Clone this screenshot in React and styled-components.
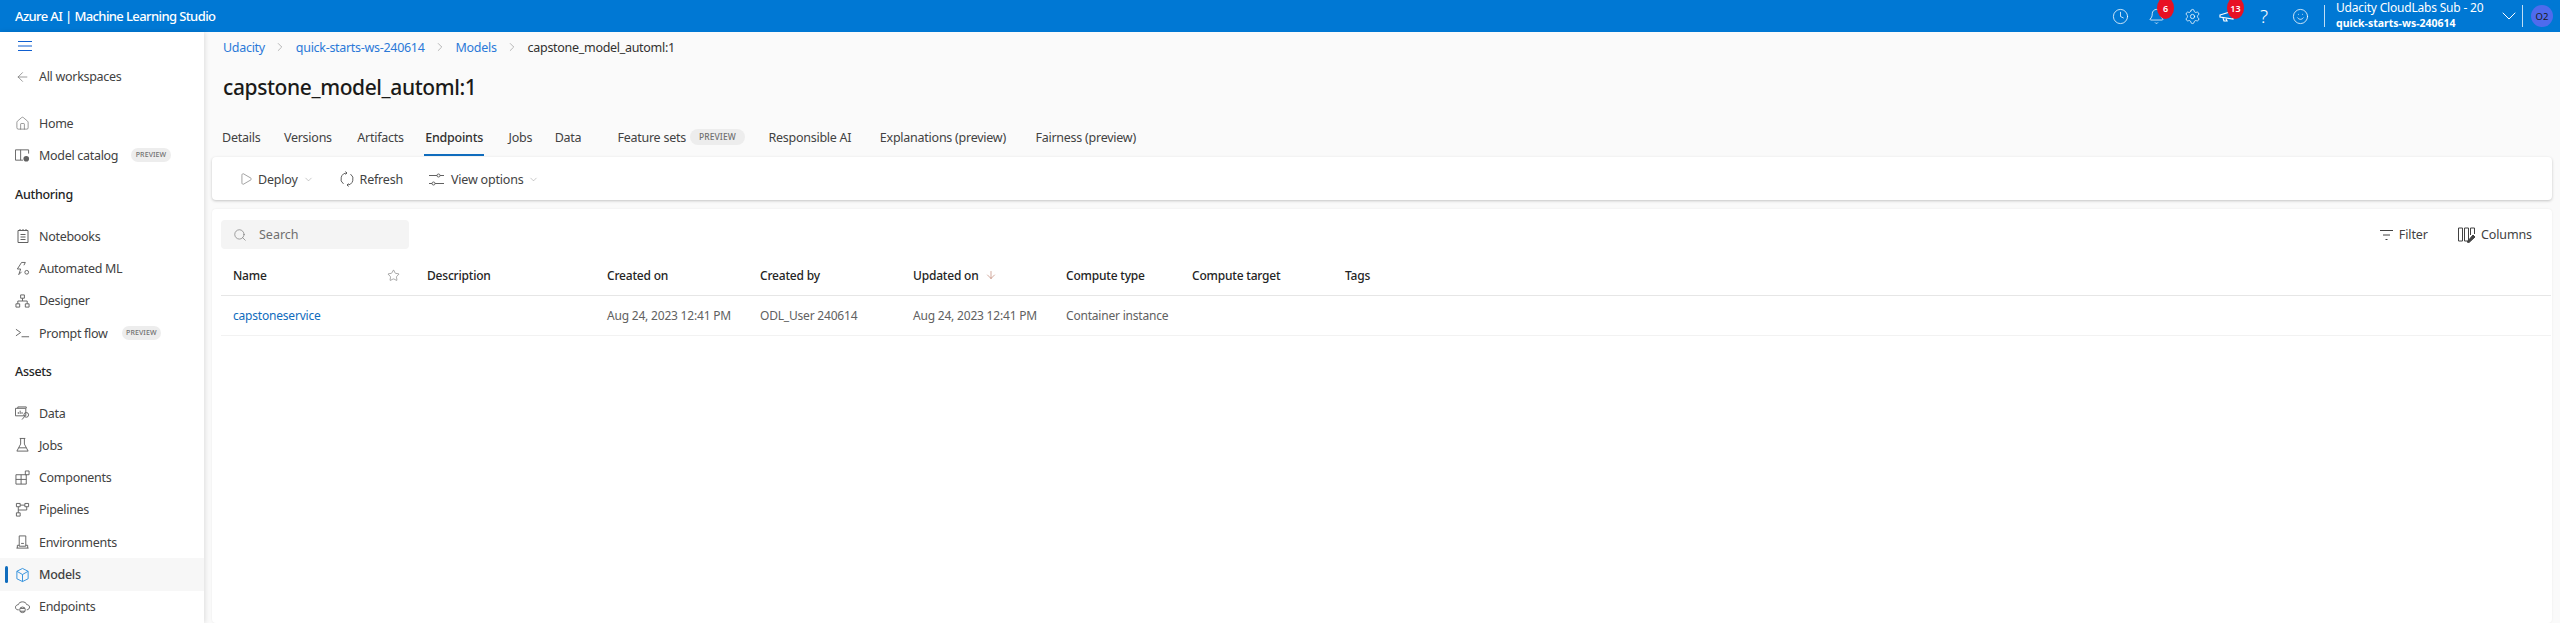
import React from 'react'
import styled, { createGlobalStyle } from 'styled-components'
import { ArrowLeft, Home, Play, ChevronDown, ChevronRight, Search, Star, Clock, Bell, Settings, Smile, ArrowDown } from 'lucide-react'

const GlobalStyle = createGlobalStyle`
  html, body { margin: 0; padding: 0; height: 100%; overflow: hidden; }
  body { font-family: "Noto Sans", "Open Sans", Arial, sans-serif; font-size: 13px; color: #323130; background: #fff; }
  #root { height: 100%; }
`

const Page = styled.div`
  display: flex;
  flex-direction: column;
  height: 623px;
  overflow: hidden;
`

const Header = styled.header`
  display: flex;
  align-items: center;
  flex: 0 0 32px;
  height: 32px;
  padding-left: 15px;
  background: #0078d4;
  color: #fff;
`

const Brand = styled.div`
  font-size: 13px;
  font-weight: 500;
  letter-spacing: -0.6px;
`

const HeaderRight = styled.div`
  display: flex;
  align-items: center;
  margin-left: auto;
  height: 100%;
`

const HeaderIcon = styled.div`
  position: relative;
  display: flex;
  align-items: center;
  justify-content: center;
  width: ${props => props.$w || 36}px;
  height: 32px;
  color: #fff;
`

const Badge = styled.span`
  position: absolute;
  top: -3px;
  left: ${props => props.$left}px;
  width: 17px;
  height: 22px;
  border-radius: 50%;
  background: #e81123;
  font-size: 9px;
  font-weight: 600;
  line-height: 24px;
  text-align: center;
`

const QuestionMark = styled.span`
  font-size: 19px;
  font-weight: 300;
  line-height: 32px;
`

const Divider = styled.div`
  width: 1px;
  height: 22px;
  background: rgba(255, 255, 255, 0.75);
`

const Account = styled.div`
  display: flex;
  flex-direction: column;
  align-self: flex-start;
  width: 159px;
  margin-left: 11px;
`

const AccountName = styled.div`
  font-size: 12px;
  line-height: 16.5px;
  white-space: nowrap;
  letter-spacing: -0.2px;
`

const AccountSub = styled.div`
  font-size: 10.5px;
  font-weight: 700;
  line-height: 15px;
  margin-top: -1px;
  white-space: nowrap;
`

const Avatar = styled.div`
  display: flex;
  align-items: center;
  justify-content: center;
  width: 22px;
  height: 22px;
  margin: 0 7px 0 8px;
  border-radius: 50%;
  background: #4f6bed;
  color: #1b1a19;
  font-size: 9.5px;
`

const Body = styled.div`
  display: flex;
  flex: 1;
  min-height: 0;
`

const Sidebar = styled.nav`
  display: flex;
  flex-direction: column;
  flex: 0 0 204px;
  box-shadow: 1px 0 5px rgba(0, 0, 0, 0.12);
  z-index: 1;
  background: #fff;
`

const Burger = styled.div`
  display: flex;
  height: 29px;
  padding-left: 18px;
  align-items: center;
  color: #0f5fd0;
`

const BackGroup = styled.div`
  display: flex;
  flex-direction: column;
  margin-bottom: 14px;
`

const NavItem = styled.div`
  position: relative;
  display: flex;
  align-items: center;
  flex: 0 0 32.3px;
  gap: 9px;
  padding-left: 15px;
  font-size: 12.5px;
  letter-spacing: -0.3px;
  color: #424242;
  background: ${props => (props.$active ? '#f7f7f7' : 'transparent')};
  ${props => props.$active && `
    font-weight: 500;
    &::before {
      content: '';
      position: absolute;
      left: 5px;
      top: 8px;
      width: 3px;
      height: 17px;
      border-radius: 2px;
      background: #0f6cbd;
    }
  `}
`

const NavIcon = styled.span`
  display: flex;
  align-items: center;
  justify-content: center;
  width: 15px;
  height: 18px;
  color: ${props => (props.$active ? '#2f8fdc' : '#616161')};
`

const Section = styled.div`
  display: flex;
  align-items: center;
  height: 32px;
  padding-left: 15px;
  margin: ${props => props.$margin};
  font-size: 12.5px;
  font-weight: 500;
  letter-spacing: -0.3px;
  color: #242424;
`

const Chip = styled.span`
  margin-left: ${props => props.$ml || 0}px;
  padding: 0 ${props => (props.$big ? 9 : 4.5)}px;
  height: ${props => (props.$big ? 15.5 : 14)}px;
  border-radius: 8px;
  background: #ededed;
  color: #707070;
  font-size: ${props => (props.$big ? 8.5 : 7)}px;
  font-weight: 500;
  line-height: ${props => (props.$big ? 15.5 : 14)}px;
  letter-spacing: 0.1px;
`

const Main = styled.main`
  display: flex;
  flex-direction: column;
  flex: 1;
  min-width: 0;
  padding: 0 8px;
  background: #fafafa;
`

const Crumbs = styled.div`
  display: flex;
  align-items: center;
  height: 30px;
  padding-left: 11px;
  font-size: 12.5px;
  letter-spacing: -0.3px;
`

const CrumbLink = styled.span`
  color: #2b79d8;
`

const CrumbSep = styled.span`
  display: flex;
  width: 31px;
  justify-content: center;
  color: #888;
`

const CrumbNow = styled.span`
  color: #323130;
`

const Title = styled.h1`
  margin: 0;
  height: 47px;
  padding-left: 11px;
  font-size: 21px;
  font-weight: 500;
  line-height: 50px;
  letter-spacing: -0.4px;
  color: #1b1a19;
`

const Tabs = styled.div`
  display: flex;
  flex: 0 0 48px;
  padding-left: 10px;
`

const Tab = styled.div`
  position: relative;
  display: flex;
  align-items: center;
  gap: 4px;
  height: 36px;
  margin-top: 10px;
  margin-right: ${props => props.$mr}px;
  font-size: 12.5px;
  letter-spacing: -0.25px;
  white-space: nowrap;
  color: #424242;
  ${props => props.$active && `
    font-weight: 500;
    color: #323130;
    &::after {
      content: '';
      position: absolute;
      left: -1px;
      right: -1px;
      bottom: -1px;
      height: 2px;
      background: #0f6cbd;
    }
  `}
`

const Card = styled.section`
  background: #fff;
  border-radius: 4px;
`

const Toolbar = styled(Card)`
  display: flex;
  align-items: center;
  flex: 0 0 42px;
  padding: 1px 0 0 22px;
  box-shadow: 0 1px 3px rgba(0, 0, 0, 0.22);
`

const ToolButton = styled.div`
  display: flex;
  align-items: center;
  margin-right: ${props => props.$mr}px;
  font-size: 12.5px;
  letter-spacing: -0.2px;
  color: #424242;
`

const ToolIcon = styled.span`
  display: flex;
  justify-content: ${props => props.$align || 'center'};
  width: ${props => props.$w}px;
  color: #616161;
`

const Caret = styled.span`
  display: flex;
  margin-left: 5px;
  color: #8a8a8a;
`

const TableCard = styled(Card)`
  flex: 1;
  margin-top: 9px;
  padding: 11px 0 0 9px;
  box-shadow: 0 0 2px rgba(0, 0, 0, 0.08);
`

const FilterBar = styled.div`
  display: flex;
  align-items: center;
  height: 29px;
`

const SearchBox = styled.div`
  display: flex;
  align-items: center;
  width: 188px;
  height: 29px;
  padding-left: 12px;
  box-sizing: border-box;
  gap: 12px;
  border-radius: 4px;
  background: #f4f4f4;
  color: #6f6f6f;
  font-size: 12.5px;
`

const FilterActions = styled.div`
  display: flex;
  align-items: center;
  margin-left: auto;
  padding-right: 20px;
  font-size: 12.5px;
  letter-spacing: -0.1px;
  color: #424242;
`

const FilterAction = styled.div`
  display: flex;
  align-items: center;
  gap: ${props => props.$gap}px;
  margin-left: ${props => props.$ml || 0}px;
`

const Row = styled.div`
  display: grid;
  grid-template-columns: 160px 34px 180px 153px 153px 153px 126px 153px 1fr;
  align-items: center;
  height: ${props => props.$h}px;
  padding: ${props => props.$pt || 0}px 0 0 12px;
  margin-right: 1px;
  border-bottom: 1px solid ${props => props.$line};
  font-size: 12px;
  letter-spacing: -0.2px;
  white-space: nowrap;
`

const HeadCell = styled.div`
  display: flex;
  align-items: center;
  gap: 6px;
  font-weight: 500;
  color: #242424;
`

const StarCell = styled(HeadCell)`
  margin-left: -6px;
  color: #616161;
`

const Cell = styled.div`
  color: #616161;
`

const NameLink = styled.a`
  color: #0f6cbd;
`

const MenuIcon = () => (
  <svg width="14" height="10" viewBox="0 0 14 10" fill="none" stroke="currentColor">
    <path d="M0 .5h14M0 5h14M0 9.500h14" />
  </svg>
)

const RefreshIcon = () => (
  <svg width="16" height="16" viewBox="0 0 16 16" fill="none" stroke="currentColor">
    <path d="M8 2A6 6 0 0 0 4.500 12.900M8 14a6 6 0 0 0 3.500-10.900" />
    <path d="M6.500 .5L8 2 6.500 3.500M9.500 12.500L8 14l1.500 1.500" />
  </svg>
)

const ModelCatalogIcon = () => (
  <svg width="16" height="16" viewBox="0 0 16 16" fill="none" stroke="currentColor">
    <path d="M.5 2.500h14v4M.5 2.500v11h8M6 2.500v11" />
    <circle cx="12" cy="12" r="3" fill="currentColor" stroke="none" />
  </svg>
)

const NotebookIcon = () => (
  <svg width="14" height="16" viewBox="0 0 14 16" fill="none" stroke="currentColor">
    <path d="M2 2.500h10v12H2zM4 1v2M7 1v2M10 1v2M4.500 6.500h5M4.500 9h5M4.500 11.500h5" />
  </svg>
)

const AutoMlIcon = () => (
  <svg width="16" height="16" viewBox="0 0 16 16" fill="none" stroke="currentColor">
    <path d="M7 1L2.500 8h3.500l-2 6 3-3M7 1h4l-1.500 3" />
    <circle cx="12.500" cy="11.500" r="2" />
  </svg>
)

const DesignerIcon = () => (
  <svg width="16" height="16" viewBox="0 0 16 16" fill="none" stroke="currentColor">
    <path d="M6 1.500h4v3.500H6zM1 11h4v3.500H1zM11 11h4v3.500h-4zM8 5v3M3 11V8h10v3" />
  </svg>
)

const PromptIcon = () => (
  <svg width="16" height="16" viewBox="0 0 16 16" fill="none" stroke="currentColor">
    <path d="M1 4l5 3.500-5 3.500M7 12h8" />
  </svg>
)

const DataIcon = () => (
  <svg width="16" height="16" viewBox="0 0 16 16" fill="none" stroke="currentColor">
    <path d="M3 3V1.500h9V3M.5 3h11v8H.5zM3.500 9V7M5.500 9V5.500M7.500 9V7" />
    <circle cx="12" cy="10" r="2.500" />
    <path d="M10 12l-2.500 3" />
  </svg>
)

const JobsIcon = () => (
  <svg width="16" height="16" viewBox="0 0 16 16" fill="none" stroke="currentColor">
    <path d="M5 1h6M6 1v6L2 14.500h12L10 7V1M4 11h8" />
  </svg>
)

const ComponentsIcon = () => (
  <svg width="16" height="16" viewBox="0 0 16 16" fill="none" stroke="currentColor">
    <path d="M1 4.500h11v10H1zM1 9.500h11M6.500 4.500v10M11 .5h4v4h-4z" />
  </svg>
)

const PipelinesIcon = () => (
  <svg width="16" height="16" viewBox="0 0 16 16" fill="none" stroke="currentColor">
    <path d="M1.500 1h4v3.500h-4zM10.500 1h4v3.500h-4zM1.500 11h4v3.500h-4zM5.500 2.800h5M3.500 4.500V11M12.500 4.500V8H3.500" />
  </svg>
)

const EnvironmentsIcon = () => (
  <svg width="16" height="16" viewBox="0 0 16 16" fill="none" stroke="currentColor">
    <path d="M4.500 1.500h7v11h-7zM1.500 14.500h13M2.500 14.500v-3h2M13.500 14.500v-3h-2M6.500 9.500h3" />
  </svg>
)

const ModelsIcon = () => (
  <svg width="16" height="16" viewBox="0 0 16 16" fill="none" stroke="currentColor">
    <path d="M8 1l6 3v8l-6 3-6-3V4zM2 4l6 3.500L14 4M8 7.500V15" />
  </svg>
)

const EndpointsIcon = () => (
  <svg width="16" height="16" viewBox="0 0 16 16" fill="none" stroke="currentColor">
    <path d="M4 11H3C1 11 .5 9 .5 8S2 5.500 3.500 5.500C4 3.500 6 2.500 8 2.500s4 1 4.500 3c1.500 0 3 1 3 2.500s-1 3-3 3" />
    <circle cx="8" cy="11" r="3" />
    <path d="M5.500 9.500h5M5.500 12.500h5" />
  </svg>
)

const Megaphone = () => (
  <svg width="18" height="18" viewBox="0 0 18 18" fill="none" stroke="currentColor" strokeWidth="1.2">
    <path d="M1 8l13-4v8L1 10zM4 11l1 3h3l-1-2" />
  </svg>
)

const ViewOptionsIcon = () => (
  <svg width="15" height="15" viewBox="0 0 15 15" fill="none" stroke="currentColor">
    <path d="M0 3.500h8M11 3.500h4M0 11.500h3M6 11.500h9" />
    <circle cx="9.500" cy="3.500" r="1.500" />
    <circle cx="4.500" cy="11.500" r="1.500" />
  </svg>
)

const FilterIcon = () => (
  <svg width="13" height="12" viewBox="0 0 13 12" fill="none" stroke="currentColor">
    <path d="M0 1.500h13M3 6h7M5.500 10.500h2" />
  </svg>
)

const ColumnsIcon = () => (
  <svg width="18" height="16" viewBox="0 0 18 16" fill="none" stroke="currentColor">
    <path d="M.5 1h4v13h-4zM6.500 1h4v13h-4zM12.500 8V1h4v6" />
    <path d="M9 15l6-7 2 2-6 5.500z" fill="currentColor" />
  </svg>
)

const PAGE_NAV_TOP = [
  { label: 'Home', Icon: () => <Home size={15} strokeWidth={1} /> },
  { label: 'Model catalog', Icon: ModelCatalogIcon, chip: true, ml: 4 },
]

const AUTHORING = [
  { label: 'Notebooks', Icon: NotebookIcon },
  { label: 'Automated ML', Icon: AutoMlIcon },
  { label: 'Designer', Icon: DesignerIcon },
  { label: 'Prompt flow', Icon: PromptIcon, chip: true, ml: 5 },
]

const ASSETS = [
  { label: 'Data', Icon: DataIcon },
  { label: 'Jobs', Icon: JobsIcon },
  { label: 'Components', Icon: ComponentsIcon },
  { label: 'Pipelines', Icon: PipelinesIcon },
  { label: 'Environments', Icon: EnvironmentsIcon },
  { label: 'Models', Icon: ModelsIcon, active: true },
  { label: 'Endpoints', Icon: EndpointsIcon },
]

const TABS = [
  { label: 'Details', mr: 23.5 },
  { label: 'Versions', mr: 25.5 },
  { label: 'Artifacts', mr: 21.5 },
  { label: 'Endpoints', mr: 25.5, active: true },
  { label: 'Jobs', mr: 22.5 },
  { label: 'Data', mr: 36 },
  { label: 'Feature sets', mr: 23.5, chip: true },
  { label: 'Responsible AI', mr: 28.5 },
  { label: 'Explanations (preview)', mr: 29.5 },
  { label: 'Fairness (preview)', mr: 0 },
]

const NavList = ({ items }) => items.map(({ label, Icon, chip, ml, active }) => (
  <NavItem key={label} $active={active}>
    <NavIcon $active={active}><Icon /></NavIcon>
    {label}
    {chip && <Chip $ml={ml}>PREVIEW</Chip>}
  </NavItem>
))

const Separator = () => <CrumbSep><ChevronRight size={14} strokeWidth={1} /></CrumbSep>

export default function App() {
  return (
    <Page>
      <GlobalStyle />
      <Header>
        <Brand>Azure AI | Machine Learning Studio</Brand>
        <HeaderRight>
          <HeaderIcon><Clock size={17} strokeWidth={1.1} /></HeaderIcon>
          <HeaderIcon><Bell size={17} strokeWidth={1.1} /><Badge $left={19}>6</Badge></HeaderIcon>
          <HeaderIcon><Settings size={17} strokeWidth={1.1} /></HeaderIcon>
          <HeaderIcon><Megaphone /><Badge $left={17}>13</Badge></HeaderIcon>
          <HeaderIcon><QuestionMark>?</QuestionMark></HeaderIcon>
          <HeaderIcon><Smile size={17} strokeWidth={1.1} /></HeaderIcon>
          <HeaderIcon $w={6} />
          <Divider />
          <Account>
            <AccountName>Udacity CloudLabs Sub - 20</AccountName>
            <AccountSub>quick-starts-ws-240614</AccountSub>
          </Account>
          <HeaderIcon $w={27}><ChevronDown size={24} strokeWidth={1} /></HeaderIcon>
          <Divider />
          <Avatar>O2</Avatar>
        </HeaderRight>
      </Header>
      <Body>
        <Sidebar>
          <Burger><MenuIcon /></Burger>
          <BackGroup>
            <NavItem>
              <NavIcon><ArrowLeft size={16} strokeWidth={1} /></NavIcon>
              All workspaces
            </NavItem>
          </BackGroup>
          <NavList items={PAGE_NAV_TOP} />
          <Section $margin="7px 0 10px">Authoring</Section>
          <NavList items={AUTHORING} />
          <Section $margin="6px 0 10px">Assets</Section>
          <NavList items={ASSETS} />
        </Sidebar>
        <Main>
          <Crumbs>
            <CrumbLink>Udacity</CrumbLink>
            <Separator />
            <CrumbLink>quick-starts-ws-240614</CrumbLink>
            <Separator />
            <CrumbLink>Models</CrumbLink>
            <Separator />
            <CrumbNow>capstone_model_automl:1</CrumbNow>
          </Crumbs>
          <Title>capstone_model_automl:1</Title>
          <Tabs>
            {TABS.map(t => (
              <Tab key={t.label} $mr={t.mr} $active={t.active}>
                {t.label}
                {t.chip && <Chip $big>PREVIEW</Chip>}
              </Tab>
            ))}
          </Tabs>
          <Toolbar>
            <ToolButton $mr={20}>
              <ToolIcon $w={24}><Play size={14} strokeWidth={1} /></ToolIcon>
              Deploy
              <Caret><ChevronDown size={11} strokeWidth={1} /></Caret>
            </ToolButton>
            <ToolButton $mr={26}>
              <ToolIcon $w={26}><RefreshIcon /></ToolIcon>
              Refresh
            </ToolButton>
            <ToolButton>
              <ToolIcon $w={22} $align="flex-start"><ViewOptionsIcon /></ToolIcon>
              View options
              <Caret><ChevronDown size={11} strokeWidth={1} /></Caret>
            </ToolButton>
          </Toolbar>
          <TableCard>
            <FilterBar>
              <SearchBox>
                <Search size={14} strokeWidth={1.1} />
                Search
              </SearchBox>
              <FilterActions>
                <FilterAction $gap={6}><FilterIcon />Filter</FilterAction>
                <FilterAction $gap={5} $ml={30}><ColumnsIcon />Columns</FilterAction>
              </FilterActions>
            </FilterBar>
            <Row $h={40} $pt={6} $line="#e6e6e6">
              <HeadCell>Name</HeadCell>
              <StarCell><Star size={13} strokeWidth={1} /></StarCell>
              <HeadCell>Description</HeadCell>
              <HeadCell>Created on</HeadCell>
              <HeadCell>Created by</HeadCell>
              <HeadCell>Updated on <ArrowDown size={12} strokeWidth={1} color="#a4543c" /></HeadCell>
              <HeadCell>Compute type</HeadCell>
              <HeadCell>Compute target</HeadCell>
              <HeadCell>Tags</HeadCell>
            </Row>
            <Row $h={39} $line="#f2f2f2">
              <NameLink>capstoneservice</NameLink>
              <Cell />
              <Cell />
              <Cell>Aug 24, 2023 12:41 PM</Cell>
              <Cell>ODL_User 240614</Cell>
              <Cell>Aug 24, 2023 12:41 PM</Cell>
              <Cell>Container instance</Cell>
              <Cell />
              <Cell />
            </Row>
          </TableCard>
        </Main>
      </Body>
    </Page>
  )
}
